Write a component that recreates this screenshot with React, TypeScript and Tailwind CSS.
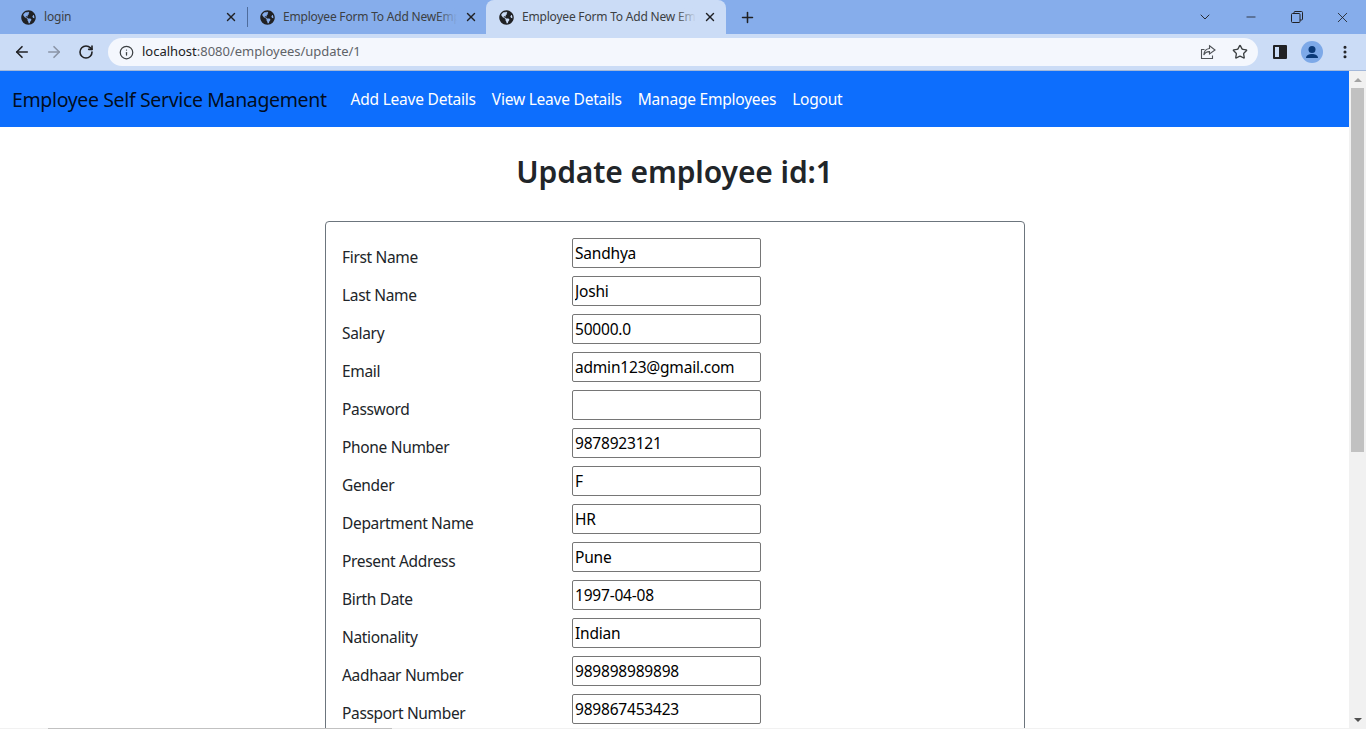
import { ArrowLeft, ArrowRight, ChevronDown, Info, Minus, MoreVertical, Plus, RotateCw, Star, X } from "lucide-react";
import { FaGlobeAmericas } from "react-icons/fa";

const fields = [
  { label: "First Name", value: "Sandhya" },
  { label: "Last Name", value: "Joshi" },
  { label: "Salary", value: "50000.0" },
  { label: "Email", value: "admin123@gmail.com" },
  { label: "Password", value: "" },
  { label: "Phone Number", value: "9878923121" },
  { label: "Gender", value: "F" },
  { label: "Department Name", value: "HR" },
  { label: "Present Address", value: "Pune" },
  { label: "Birth Date", value: "1997-04-08" },
  { label: "Nationality", value: "Indian" },
  { label: "Aadhaar Number", value: "989898989898" },
  { label: "Passport Number", value: "989867453423" },
];

const navLinks = ["Add Leave Details", "View Leave Details", "Manage Employees", "Logout"];

const Tab = ({ title, active, className, fade }: { title: string; active?: boolean; className: string; fade?: boolean }) => (
  <div className={`flex items-center h-[34px] ${className} ${active ? "bg-[#cbdcf6] rounded-t-[8px]" : ""}`}>
    <FaGlobeAmericas className="w-[15px] h-[15px] shrink-0 text-[#202124]" />
    <div className="relative flex-1 min-w-0 ml-[8px] overflow-hidden whitespace-nowrap text-[12px] tracking-[-0.2px] text-[#3c4043]">
      {title}
      {fade && <div className={`absolute top-0 right-0 h-full w-[20px] bg-gradient-to-r from-transparent ${active ? "to-[#cbdcf6]" : "to-[#86adeb]"}`} />}
    </div>
    <X className="w-[14px] h-[14px] shrink-0 ml-[7px] text-[#202124]" strokeWidth={2.4} />
  </div>
);

export default function App() {
  return (
    <div className="w-[1366px] h-[729px] overflow-hidden flex flex-col bg-white font-['Noto_Sans','Open_Sans',sans-serif]">
      {/* browser tabs */}
      <div className="h-[34px] shrink-0 flex items-center bg-[#86adeb]">
        <div className="w-[7px]" />
        <Tab title="login" className="w-[240px] pl-[14px] pr-[9px]" />
        <div className="w-px h-[20px] bg-[#4e6c9c]" />
        <Tab title="Employee Form To Add NewEmployee" className="w-[238px] pl-[12px] pr-[8px]" fade />
        <Tab title="Employee Form To Add New Employee" className="w-[240px] pl-[13px] pr-[9px]" active fade />
        <Plus className="w-[17px] h-[17px] ml-[13px] text-[#202124]" strokeWidth={2.2} />
        <div className="flex-1" />
        <ChevronDown className="w-[16px] h-[16px] mr-[31px] text-[#202124]" strokeWidth={1.4} />
        <Minus className="w-[14px] h-[14px] mr-[33px] text-[#202124]" strokeWidth={1.4} />
        <svg viewBox="0 0 12 12" className="w-[12px] h-[12px] mr-[31px] text-[#202124]" fill="none" stroke="currentColor">
          <rect x="0.5" y="2.5" width="8.5" height="9" rx="1" />
          <path d="M3 2.5V1.5a1 1 0 0 1 1-1h6.5a1 1 0 0 1 1 1V8a1 1 0 0 1-1 1H9" />
        </svg>
        <X className="w-[17px] h-[17px] mr-[15px] text-[#202124]" strokeWidth={1.2} />
      </div>

      {/* address bar */}
      <div className="h-[36px] shrink-0 flex items-center bg-[#cbdcf6]">
        <ArrowLeft className="w-[18px] h-[18px] ml-[13px] text-[#202124]" strokeWidth={2.2} />
        <ArrowRight className="w-[18px] h-[18px] ml-[14px] text-[#8a94a6]" strokeWidth={2.2} />
        <RotateCw className="w-[16px] h-[16px] ml-[15px] text-[#202124]" strokeWidth={2.4} />
        <div className="ml-[14px] w-[1150px] h-[28px] rounded-full bg-[#f4f7fd] flex items-center">
          <Info className="w-[15px] h-[15px] ml-[11px] text-[#3c4043]" strokeWidth={2} />
          <div className="ml-[8px] text-[13px] tracking-[-0.02px] text-[#5f6368]">
            <span className="text-[#202124]">localhost</span>:8080/employees/update/1
          </div>
          <div className="flex-1" />
          <svg viewBox="0 0 16 16" className="w-[16px] h-[16px] text-[#4f5358]" fill="none" stroke="currentColor" strokeWidth="1.1">
            <path d="M4.500 5.500H1.500v9h11v-3" />
            <path d="M9.500 1.800 15 6l-5.500 4V7.600C7 7.500 5 8.600 3.800 11 4 7.500 6 4.800 9.500 4.500z" />
          </svg>
          <Star className="w-[16px] h-[16px] ml-[16px] mr-[10px] text-[#3c4043]" strokeWidth={2} />
        </div>
        <div className="ml-[15px] w-[14px] h-[14px] rounded-[1px] border-[2px] border-[#202124] flex justify-end">
          <div className="w-[6px] bg-[#202124]" />
        </div>
        <div className="ml-[14px] w-[22px] h-[22px] rounded-full bg-[#7da9e8] flex items-center justify-center overflow-hidden">
          <svg viewBox="0 0 22 22" className="w-[22px] h-[22px] text-[#0b3a78]" fill="currentColor">
            <circle cx="11" cy="8.500" r="3.500" />
            <path d="M5 17c0-2.800 3-4 6-4s6 1.200 6 4z" />
          </svg>
        </div>
        <MoreVertical className="w-[16px] h-[16px] ml-[14px] text-[#202124]" strokeWidth={2.6} />
      </div>

      <div className="h-px shrink-0 bg-[#a3b8da]" />

      <div className="flex flex-1 min-h-0">
        <div className="flex-1 min-w-0 overflow-hidden">
          {/* navbar */}
          <div className="h-[56px] flex items-center bg-[#0d6efd] pl-[12px]">
            <div className="pt-[2px] mr-[16px] text-[19.5px] tracking-[-0.36px] text-black/90">Employee Self Service Management</div>
            {navLinks.map((link) => (
              <div key={link} className="pt-[2px] px-[8px] text-[15.5px] tracking-[-0.22px] text-white">
                {link}
              </div>
            ))}
          </div>

          <h2 className="mt-[24px] text-center text-[30px] leading-[42px] tracking-[-0.1px] font-semibold text-[#212529]">Update employee id:1</h2>

          {/* form card */}
          <div className="mt-[28px] ml-[325px] w-[700px] border border-[#6c757d] rounded-[4px] p-[16px]">
            <div className="flex flex-col gap-[8px]">
              {fields.map((field) => (
                <div key={field.label} className="flex h-[30px]">
                  <label className="w-[230px] pt-[7px] text-[15.5px] leading-[24px] tracking-[-0.33px] text-[#212529]">{field.label}</label>
                  <input
                    readOnly
                    value={field.value}
                    className="w-[189px] h-[30px] border border-[#767676] rounded-[2px] pl-[2px] pr-[3px] text-[15.5px] tracking-[-0.2px] text-black bg-white outline-none"
                  />
                </div>
              ))}
            </div>
          </div>
        </div>

        {/* page scrollbar */}
        <div className="w-[17px] shrink-0 flex flex-col items-center bg-[#f1f1f1]">
          <div className="h-[17px] flex items-center justify-center">
            <div className="w-0 h-0 border-x-[4px] border-x-transparent border-b-[4px] border-b-[#a3a3a3]" />
          </div>
          <div className="w-[13px] h-[364px] bg-[#c1c1c1]" />
          <div className="flex-1" />
          <div className="h-[17px] flex items-center justify-center">
            <div className="w-0 h-0 border-x-[4px] border-x-transparent border-t-[4px] border-t-[#505050]" />
          </div>
        </div>
      </div>

      {/* bottom edge of horizontal scrollbar */}
      <div className="h-px shrink-0 bg-[#f1f1f1] pl-[48px]">
        <div className="w-[344px] h-px bg-[#c1c1c1]" />
      </div>
    </div>
  );
}
